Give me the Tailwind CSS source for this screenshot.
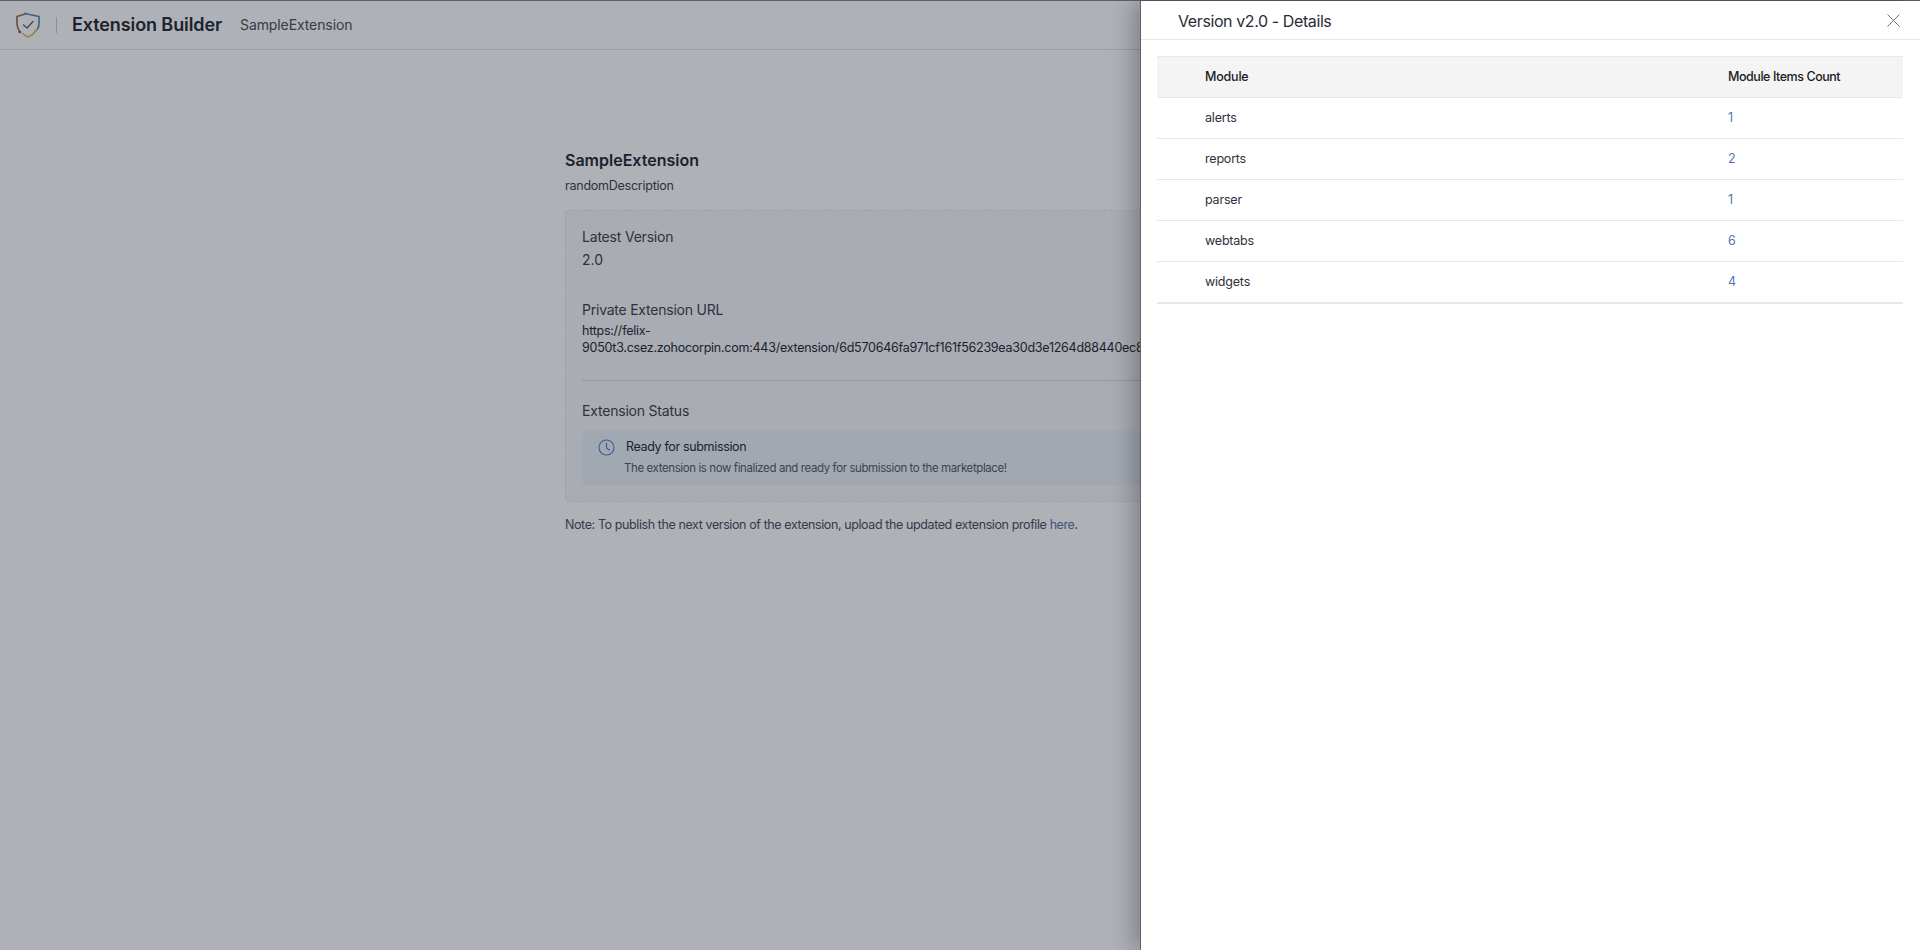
<!DOCTYPE html>
<html lang="en">
<head>
    <meta charset="UTF-8">
    <meta name="viewport" content="width=device-width, initial-scale=1.0">
    <title>Extension Builder - SampleExtension</title>
    <script src="https://cdn.jsdelivr.net/npm/@tailwindcss/browser@4"></script>
</head>
<body class="bg-white font-['Inter',sans-serif] text-[#23232f] overflow-hidden">
    <div class="relative h-[950px] w-[1920px] overflow-hidden">
        <!-- page behind the drawer -->
        <header class="flex h-[50px] items-center border-b border-[#dfe1e3] pt-px">
            <svg class="ml-[15px] h-[26px] w-[26px]" viewBox="0 0 26 26" fill="none" stroke-width="1.6" stroke-linecap="round" stroke-linejoin="round">
                <path d="M8.5 2.5 L2 4.5 L2 12 Q2.5 16.5 4.5 19.5" stroke="#8a6a3c"/>
                <circle cx="4.8" cy="20" r="1.2" fill="#4a4a58"/>
                <path d="M11 1.8 L24 4.5 L24 12 Q24 14.5 22.5 17" stroke="#5a80b8"/>
                <circle cx="10" cy="1.8" r="1.2" fill="#5a80b8"/>
                <path d="M7.5 21.5 Q10.5 24 13.5 25 Q17.5 23.5 20.5 19" stroke="#e3b35c"/>
                <circle cx="21" cy="18.5" r="1.2" fill="#e3b35c"/>
                <path d="M8.5 13 L12 16 L18 9.5" stroke="#555c68" stroke-width="1.3"/>
            </svg>
            <div class="ml-[15px] h-4 w-px bg-[#c9ccd0]"></div>
            <h1 class="ml-[15px] text-lg leading-none font-semibold tracking-[-0.1px]">Extension Builder</h1>
            <span class="ml-[18px] text-sm tracking-[-0.1px] text-[#4a4a58]">SampleExtension</span>
        </header>

        <main class="ml-[565px] w-[790px] pt-[100px]">
            <h2 class="text-base leading-5 font-semibold">SampleExtension</h2>
            <p class="mt-[6px] text-[12.5px] leading-5 tracking-[-0.24px] text-[#3b3b48]">randomDescription</p>
            <section class="mt-[14px] h-[292px] rounded border border-dashed border-[#e3e4e6] bg-[#f8f8f9] px-[16px] pt-[16px]">
                <p class="text-sm leading-5 tracking-[-0.2px] text-[#3b3b48]">Latest Version</p>
                <p class="mt-[3px] text-sm leading-5 text-[#3b3b48]">2.0</p>
                <p class="mt-[30px] text-sm leading-5 tracking-[-0.23px] text-[#3b3b48]">Private Extension URL</p>
                <p class="mt-[2px] text-[12.5px] leading-[17px] tracking-[-0.25px] text-[#23232f]">https://felix-<br><span class="whitespace-nowrap">9050t3.csez.zohocorpin.com:443/extension/6d570646fa971cf161f56239ea30d3e1264d88440ec8e</span></p>
                <div class="mt-[24px] border-t border-[#d5d7da]"></div>
                <p class="mt-[20px] text-sm leading-5 tracking-[-0.2px] text-[#3b3b48]">Extension Status</p>
                <div class="mt-[10px] h-[54px] rounded bg-[#edf1f7] pt-[6px] pl-[16px]">
                    <div class="flex items-center gap-[11px]">
                        <svg class="h-[17px] w-[17px]" viewBox="0 0 17 17" fill="none" stroke="#4f7fc4" stroke-width="1.1" stroke-linecap="round" stroke-linejoin="round">
                            <circle cx="8.5" cy="8.5" r="7.5"/>
                            <path d="M8.5 4 V9 L11.5 11"/>
                        </svg>
                        <span class="text-[12.5px] leading-5 tracking-[-0.35px] text-[#23232f]">Ready for submission</span>
                    </div>
                    <p class="mt-[3px] ml-[26px] text-[11.5px] leading-4 tracking-[-0.4px] text-[#55555f]">The extension is now finalized and ready for submission to the marketplace!</p>
                </div>
            </section>
            <p class="mt-[13px] text-[12.5px] leading-5 tracking-[-0.4px] text-[#4a4a58]">Note: To publish the next version of the extension, upload the updated extension profile <a class="text-[#5377ad]">here</a>.</p>
        </main>

        <!-- overlay -->
        <div class="absolute inset-0 bg-[#18202f]/35"></div>
        <div class="absolute inset-x-0 top-0 h-px bg-[#5c5f64]"></div>

        <!-- drawer -->
        <aside class="absolute top-px right-0 bottom-0 w-[780px] border-l border-[#5f6368] bg-white shadow-[-8px_0_20px_rgba(0,0,0,0.25)]">
            <div class="flex h-[39px] items-center justify-between border-b border-[#e8e8e8] pt-px pr-[20px] pl-[37px]">
                <h3 class="text-base tracking-[-0.4px] text-[#2b2b36]">Version v2.0 - Details</h3>
                <svg class="h-[13px] w-[13px]" viewBox="0 0 13 13" fill="none" stroke="#707070" stroke-width="1">
                    <path d="M0.5 0.5 L12.5 12.5 M12.5 0.5 L0.5 12.5"/>
                </svg>
            </div>
            <table class="mt-4 ml-[16px] w-[746px] table-fixed border-b-2 border-[#e8e8e8] text-[12.5px] tracking-[-0.2px] text-[#30303a]">
                <thead class="bg-[#f4f4f4] text-[#1b1b24]">
                    <tr class="h-[41px] border-y border-[#e8e8e8]">
                        <th class="w-[571px] pl-[48px] text-left font-medium">Module</th>
                        <th class="text-left font-medium tracking-[-0.45px]">Module Items Count</th>
                    </tr>
                </thead>
                <tbody id="moduleRows">
                    <tr class="h-[41px] border-b border-[#e8e8e8]"><td class="pl-[48px]">alerts</td><td class="text-[#5377ad]">1</td></tr>
                    <tr class="h-[41px] border-b border-[#e8e8e8]"><td class="pl-[48px]">reports</td><td class="text-[#5377ad]">2</td></tr>
                    <tr class="h-[41px] border-b border-[#e8e8e8]"><td class="pl-[48px]">parser</td><td class="text-[#5377ad]">1</td></tr>
                    <tr class="h-[41px] border-b border-[#e8e8e8]"><td class="pl-[48px]">webtabs</td><td class="text-[#5377ad]">6</td></tr>
                    <tr class="h-[41px]"><td class="pt-px pl-[48px]">widgets</td><td class="pt-px text-[#5377ad]">4</td></tr>
                </tbody>
            </table>
        </aside>
    </div>
</body>
</html>
